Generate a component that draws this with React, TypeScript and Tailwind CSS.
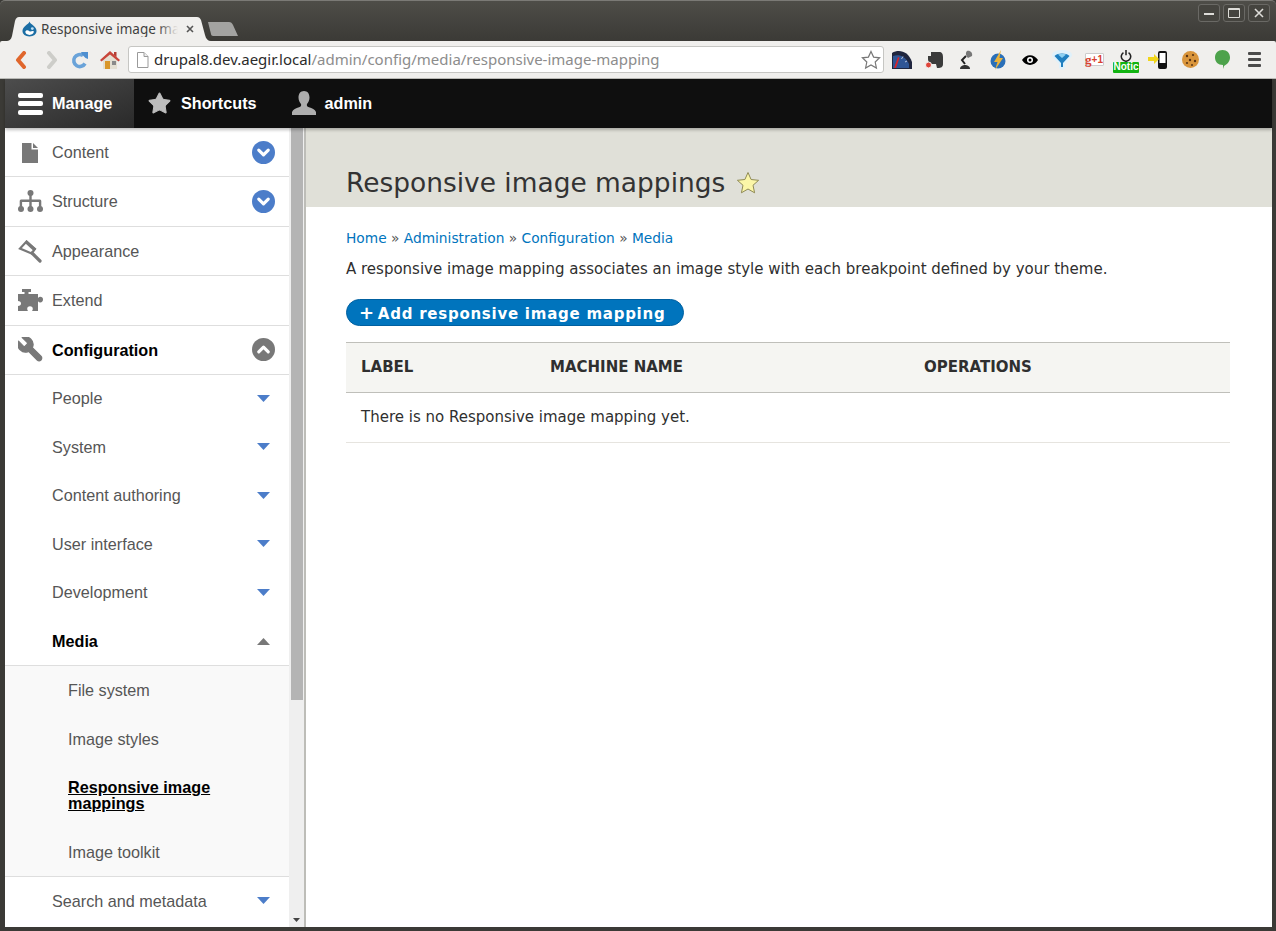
import { ChevronDown, ChevronUp, Star } from 'lucide-react'
import type { ReactNode } from 'react'

const sans = 'font-["Liberation_Sans",Arial,sans-serif]'
const dejavu = 'font-["DejaVu_Sans",sans-serif]'

function TabShape() {
  return (
    <svg className="absolute inset-0" height="24" viewBox="0 0 212 24" width="212">
      <path d="M0 24c3 0 5-1 6-5l3-15c1-3 2-4 4-4h178c2 0 3 1 4 3l4 15c1 4 3 6 6 6z" fill="#f0efed" />
    </svg>
  )
}

function DrupalDrop() {
  return (
    <svg height="16" viewBox="0 0 16 16" width="15">
      <path d="M8 0c.5 2 2.500 3 4 4.200 2 1.600 3.500 3.500 3.500 6 0 3.300-3.200 5.800-7.500 5.800S.5 13.500.5 10.200c0-2.500 1.500-4.400 3.500-6C5.500 3 7.500 2 8 0z" fill="#1c6ea4" />
      <path d="M3.500 11c1.500-2.500 3-1.500 4.500-.5s3-1.500 4.500 0c.5 2-2 3.800-4.500 3.800S3.500 13 3.500 11z" fill="#fff" />
      <circle cx="11" cy="7.500" fill="#bfe0f5" r="1.500" />
    </svg>
  )
}

function NavIcons() {
  return (
    <div className="flex w-[128px] items-center">
      <span className="flex w-[30px] justify-center pl-[12px]">
        <svg height="18" viewBox="0 0 12 18" width="12">
          <path d="M9 2 3 9l6 7" fill="none" stroke="#e0662c" strokeLinecap="round" strokeLinejoin="round" strokeWidth="4" />
        </svg>
      </span>
      <span className="flex w-[30px] justify-center pl-[13px]">
        <svg height="18" viewBox="0 0 12 18" width="12">
          <path d="m3 2 6 7-6 7" fill="none" stroke="#cdcdc9" strokeLinecap="round" strokeLinejoin="round" strokeWidth="4" />
        </svg>
      </span>
      <span className="flex w-[30px] justify-center pl-[10px]">
        <svg height="18" viewBox="0 0 18 18" width="18">
          <path d="M14 12.500A6 6 0 1 1 12 4.500" fill="none" stroke="#6aa3d9" strokeWidth="3.600" />
          <path d="M10 1h7v7l-2.500-1-3-3z" fill="#4f8fd0" />
        </svg>
      </span>
      <span className="flex w-[30px] justify-center pl-[9px]">
        <svg height="18" viewBox="0 0 20 18" width="20">
          <path d="M10 2 3 8v10h14V8z" fill="#e4dfd2" />
          <path d="M14 1h2.500v5L14 4z" fill="#b33d33" />
          <path d="M10 0 0 9l1.500 1.500L10 3.500l8.500 7L20 9z" fill="#c8453a" />
          <path d="M5 10h5v8H5z" fill="#d9962a" />
          <path d="M12 10h4v4h-4z" fill="#8a8a8a" />
        </svg>
      </span>
    </div>
  )
}

function Omnibox() {
  return (
    <div className="flex h-[27px] w-[756px] items-center rounded-[3px] border border-[#c6c6c3] bg-white pl-[7px] pr-[2px]">
      <svg height="16" viewBox="0 0 12 16" width="13">
        <path d="M1 .5h6.500L11.500 4.500v11H1z" fill="#fff" stroke="#9a9a9a" />
        <path d="M7.500.5v4h4" fill="#eee" stroke="#9a9a9a" />
      </svg>
      <span className='ml-[5px] flex-1 whitespace-nowrap font-["Noto_Sans",sans-serif] text-[15px] leading-none text-[#8c8c8c]'>
        <span className="text-[#2b2b2b]">drupal8.dev.aegir.local</span>
        /admin/config/media/responsive-image-mapping
      </span>
      <svg height="20" viewBox="0 0 20 20" width="20">
        <path d="m10 1.500 2.600 5.600 6 .7-4.400 4.200 1.200 6L10 15l-5.400 3 1.200-6L1.400 7.800l6-.7z" fill="#fff" stroke="#777" strokeWidth="1.200" />
      </svg>
    </div>
  )
}

function ExtIcons() {
  return (
    <div className="ml-[2px] flex items-center">
      <Ext>
        <svg height="19" viewBox="0 0 20 19" width="20">
          <path d="M0 19V3C7-1 16 1 20 12v7z" fill="#20263f" />
          <path d="M1 18V6c5-2 12-1 16 8v4z" fill="#2f5596" />
          <path d="M2 18 6 7l1.500.8L4 18z" fill="#d8232a" />
          <path d="M11 6.500 9.500 9M15 11l-2 1" stroke="#b9c6de" strokeWidth="1" />
        </svg>
      </Ext>
      <Ext>
        <svg height="19" viewBox="0 0 18 19" width="18">
          <path d="M6 2h8c3 0 4 2 4 5v7c0 3-2 4-5 4h-1l-1-4H8C5 14 3 12 3 9V6h3z" fill="#3b3b3b" />
          <circle cx="3.500" cy="15" fill="#e0453a" r="3" stroke="#f4f4f4" />
        </svg>
      </Ext>
      <Ext>
        <svg height="20" viewBox="0 0 14 20" width="14">
          <path d="M8 1c3-1 6 2 5 5L9 8C7 6 6 3 8 1z" fill="#777" />
          <path d="M7 6 3 10l3 4" fill="none" stroke="#222" strokeWidth="2" />
          <path d="M1 19c0-3 3-4 5-4s5 1 5 4z" fill="#333" />
        </svg>
      </Ext>
      <Ext>
        <svg height="20" viewBox="0 0 16 20" width="16">
          <circle cx="8" cy="11" fill="#2a6fb8" r="7.500" />
          <path d="M11 0 4 12h3.500L5 20l8-12H9.500z" fill="#eab33b" />
        </svg>
      </Ext>
      <Ext>
        <svg height="10" viewBox="0 0 16 10" width="16">
          <path d="M0 5c4-6.500 12-6.500 16 0-4 6.500-12 6.500-16 0z" fill="#000" />
          <circle cx="8" cy="5" fill="#fff" r="3" />
          <circle cx="8" cy="5" fill="#000" r="1.500" />
        </svg>
      </Ext>
      <Ext>
        <svg height="20" viewBox="0 0 20 20" width="20">
          <path d="M0 5c0-3 5-5 10-5s10 2 10 5c0 2-4 6-7 9v4l-3 2-3-2v-4C4 11 0 7 0 5z" fill="#dff1fb" />
          <path d="M2.500 6c2-1.800 4.500-2.500 7.500-2.500S15.500 4.200 17.500 6L11 13v4H9v-4z" fill="#1f7fc0" />
          <path d="M6 4.500 10 8l4-3.500c-2.500-1-5.500-1-8 0z" fill="#8bd0f2" />
        </svg>
      </Ext>
      <Ext>
        <span className={`flex h-[13px] w-[19px] items-center justify-center rounded-[1px] border border-[#ccc] bg-white ${sans} text-[10px] font-bold leading-none text-[#d8402f]`}>
          <span className='font-["Liberation_Serif",serif] text-[13px]'>g</span>
          +1
        </span>
      </Ext>
      <Ext>
        <span className="relative flex h-[24px] w-[26px] justify-center">
          <svg className="mt-[2px]" height="12" viewBox="0 0 14 14" width="12">
            <path d="M4 3a5.500 5.500 0 1 0 6 0M7 0v6" fill="none" stroke="#222" strokeWidth="1.800" />
          </svg>
          <span className={`absolute left-0 top-[14px] flex h-[11px] w-[26px] items-center justify-center rounded-[1px] bg-[#12b312] ${sans} text-[10px] font-bold leading-none text-white`}>
            Notic
          </span>
        </span>
      </Ext>
      <Ext>
        <svg height="18" viewBox="0 0 20 18" width="20">
          <rect fill="#111" height="18" rx="2" width="9" x="10" />
          <rect fill="#fff" height="10" width="6" x="11.500" y="2" />
          <path d="M0 6h6V3l5 5-5 5v-3H0z" fill="#f1d51a" />
        </svg>
      </Ext>
      <Ext>
        <svg height="17" viewBox="0 0 17 17" width="17">
          <circle cx="8.500" cy="8.500" fill="#d9953c" r="8.500" />
          <circle cx="5" cy="5" fill="#5a3414" r="1.200" />
          <circle cx="11" cy="4" fill="#5a3414" r="1.100" />
          <circle cx="8" cy="9" fill="#5a3414" r="1.200" />
          <circle cx="13" cy="10" fill="#5a3414" r="1.200" />
          <circle cx="5" cy="12" fill="#5a3414" r="1.100" />
          <circle cx="10" cy="14" fill="#5a3414" r="1" />
        </svg>
      </Ext>
      <Ext>
        <svg height="19" viewBox="0 0 15 19" width="15">
          <path d="M7.500 0C12 0 15 3 15 7.500c0 4-3 7-6 8.500l-1 3V15C3 15 0 12 0 7.500S3 0 7.500 0z" fill="#4da24b" />
        </svg>
      </Ext>
      <Ext>
        <span className="flex w-[13px] flex-col gap-[3px]">
          <span className="h-[3px] rounded-[1px] bg-[#4a4a4a]" />
          <span className="h-[3px] rounded-[1px] bg-[#4a4a4a]" />
          <span className="h-[3px] rounded-[1px] bg-[#4a4a4a]" />
        </span>
      </Ext>
    </div>
  )
}

function Ext({ children }: { children: ReactNode }) {
  return <span className="flex h-[38px] w-[32px] items-center justify-center">{children}</span>
}

function WinButton({ children }: { children: ReactNode }) {
  return (
    <span className="flex h-[18px] w-[22px] items-center justify-center rounded-[3px] border border-[#6a6965] bg-[#45443f]">
      {children}
    </span>
  )
}

function BrowserChrome() {
  return (
    <>
      <div className="flex h-[41px] items-start justify-between rounded-t-[5px] border-t border-[#7b7a76] bg-linear-to-b from-[#4e4d48] to-[#3b3a36]">
        <div className="flex pl-[6px] pt-[16px]">
          <div className="relative flex h-[24px] w-[212px] items-center pl-[16px]">
            <TabShape />
            <span className="relative flex items-center">
              <DrupalDrop />
              <span className='relative ml-[4px] w-[137px] overflow-hidden whitespace-nowrap font-["Noto_Sans",sans-serif] text-[13.500px] leading-[16px] text-[#3f3f3f]'>
                Responsive image mappings
                <span className="absolute inset-y-0 right-0 w-[20px] bg-linear-to-r from-transparent to-[#f0efed]" />
              </span>
              <svg className="ml-[8px]" height="8" viewBox="0 0 8 8" width="8">
                <path d="m1 1 6 6M7 1 1 7" stroke="#555" strokeWidth="1.600" />
              </svg>
            </span>
          </div>
          <svg className="-ml-[11px] mt-[5px]" height="14" viewBox="0 0 32 14" width="32">
            <path d="M1 0h21c2 0 3 1 4 3l5 11H6c-1 0-2-1-2-2z" fill="#a3a3a1" />
          </svg>
        </div>
        <div className="flex gap-[3px] pr-[6px] pt-[3px]">
          <WinButton>
            <span className="mt-[2px] h-[2px] w-[10px] bg-[#dddcd8]" />
          </WinButton>
          <WinButton>
            <span className="h-[10px] w-[12px] rounded-[1px] border border-t-2 border-[#dddcd8]" />
          </WinButton>
          <WinButton>
            <svg height="10" viewBox="0 0 10 10" width="10">
              <path d="m1 1 8 8M9 1 1 9" stroke="#dddcd8" strokeWidth="1.600" />
            </svg>
          </WinButton>
        </div>
      </div>
      <div className="flex h-[38px] items-center rounded-t-[2px] border-b border-[#bcbcb8] bg-[#f0efed]">
        <NavIcons />
        <Omnibox />
        <ExtIcons />
      </div>
    </>
  )
}

function AdminBar() {
  return (
    <div className={`relative z-10 flex h-[49px] shrink-0 items-center bg-[#0f0f0f] shadow-[0_2px_3px_rgba(0,0,0,0.25)] ${sans} text-[16.200px] font-bold text-white`}>
      <div className="flex h-full w-[129px] items-center bg-linear-to-br from-[#4d4d4d] to-[#2a2a2a] pl-[13px]">
        <span className="flex w-[25px] flex-col gap-[3.500px]">
          <span className="h-[5px] rounded-[2px] bg-white" />
          <span className="h-[5px] rounded-[2px] bg-white" />
          <span className="h-[5px] rounded-[2px] bg-white" />
        </span>
        <span className="ml-[9px]">Manage</span>
      </div>
      <div className="flex items-center pl-[13px]">
        <Star className="fill-[#bdbdbd] text-[#bdbdbd]" size={25} strokeWidth={1} />
        <span className="ml-[9px]">Shortcuts</span>
      </div>
      <div className="ml-[35px] flex items-center">
        <svg height="24" viewBox="0 0 24 24" width="24">
          <path d="M12 0c3.600 0 5.500 2.800 5.500 6.500 0 2.800-1.200 5-2.500 6.500-.5 1.500 0 2.500 2 3.300 3 1.200 6 2 7 4.700v3H0v-3c1-2.700 4-3.500 7-4.700 2-.8 2.500-1.800 2-3.300-1.300-1.500-2.500-3.700-2.500-6.500C6.500 2.800 8.400 0 12 0z" fill="#adadad" />
        </svg>
        <span className="ml-[9px]">admin</span>
      </div>
    </div>
  )
}

const iconGrey = '#787878'

const menuIcons: Record<string, ReactNode> = {
  Content: (
    <svg height="20" viewBox="0 0 16 20" width="16">
      <path d="M0 0h9.500v6.500H16V20H0z" fill={iconGrey} />
      <path d="M11 0l5 5h-5z" fill={iconGrey} />
    </svg>
  ),
  Structure: (
    <svg height="22" viewBox="0 0 25 22" width="25">
      <g fill={iconGrey}>
        <circle cx="12.500" cy="3" r="3" />
        <circle cx="3" cy="19" r="3" />
        <circle cx="12.500" cy="19" r="3" />
        <circle cx="22" cy="19" r="3" />
        <path d="M11.300 4h2.400v5.500H22a1.500 1.500 0 0 1 1.300 1.500v6h-2.400v-5h-7.200v5h-2.400v-5H4.100v5H1.700v-6A1.500 1.500 0 0 1 3 9.500h8.300z" />
      </g>
    </svg>
  ),
  Appearance: (
    <svg height="24" viewBox="0 0 24 24" width="24">
      <path d="M8.500 2.500 17 10l-3.500 4.500L2 9.500z" fill="none" stroke={iconGrey} strokeWidth="2.200" />
      <path d="M8.500 1 18 10l-1.800 2.500L7 4z" fill={iconGrey} />
      <path d="m14 14 8 8" stroke={iconGrey} strokeLinecap="round" strokeWidth="3.200" />
    </svg>
  ),
  Extend: (
    <svg height="23" viewBox="0 0 25 23" width="25">
      <path
        d="M0 5h6.500V3H4V0h9v3h-2.500v2H20v4c.7-.8 1.400-1.200 2.200-1.200a2.800 2.800 0 0 1 0 5.600c-.8 0-1.500-.4-2.200-1.200V22h-6c.5-.8.800-1.400.8-2a2.800 2.800 0 0 0-5.600 0c0 .6.300 1.200.8 2H0v-5c2 0 3-1 3-2.500S2 12 0 12z"
        fill={iconGrey}
      />
    </svg>
  ),
  Configuration: (
    <svg height="25" viewBox="2 2 20 20" width="25">
      <path
        d="M14.700 6.300a1 1 0 0 0 0 1.400l1.600 1.600a1 1 0 0 0 1.400 0l3.770-3.770a6 6 0 0 1-7.940 7.940l-6.910 6.910a2.120 2.120 0 0 1-3-3l6.910-6.910a6 6 0 0 1 7.940-7.940l-3.760 3.760z"
        fill={iconGrey}
        stroke={iconGrey}
        transform="matrix(-1 0 0 1 24 0)"
      />
    </svg>
  ),
}

function TopItem({ label, open, toggle, first }: { label: string; open?: boolean; toggle?: boolean; first?: boolean }) {
  return (
    <div
      className={`flex shrink-0 items-center border-b border-[#dedede] pr-[14px] ${first ? 'h-[49px] pt-[1px]' : 'h-[49.500px]'} ${
        open ? 'font-bold text-black' : 'text-[#565656]'
      }`}
    >
      <span className="flex w-[47px] justify-center pl-[7px] pr-[4px]">{menuIcons[label]}</span>
      <span className="flex-1">{label}</span>
      {toggle && (
        <span
          className={`flex h-[23px] w-[23px] items-center justify-center rounded-full ${
            open ? 'bg-[#787878]' : 'bg-[#4c7dc9]'
          }`}
        >
          {open ? (
            <ChevronUp className="text-white" size={19} strokeWidth={4} />
          ) : (
            <ChevronDown className="text-white" size={19} strokeWidth={4} />
          )}
        </span>
      )}
    </div>
  )
}

function SubItem({ label, open }: { label: string; open?: boolean }) {
  return (
    <div
      className={`flex h-[48.600px] shrink-0 items-center pl-[47px] pr-[19px] ${
        open ? 'font-bold text-black' : 'text-[#565656]'
      }`}
    >
      <span className="flex-1">{label}</span>
      <svg height="7" viewBox="0 0 13 7" width="13">
        <path d={open ? 'M6.500 0 13 7H0z' : 'M0 0h13L6.500 7z'} fill={open ? iconGrey : '#4c7dc9'} />
      </svg>
    </div>
  )
}

function LeafItem({ children, className }: { children: ReactNode; className: string }) {
  return (
    <div className={`flex shrink-0 items-center pl-[63px] leading-[16px] ${className}`}>
      <span>{children}</span>
    </div>
  )
}

function Sidebar() {
  return (
    <div className="flex shrink-0">
      <aside className={`flex w-[284px] flex-col overflow-hidden bg-white ${sans} text-[16.200px]`}>
        <TopItem first label="Content" toggle />
        <TopItem label="Structure" toggle />
        <TopItem label="Appearance" />
        <TopItem label="Extend" />
        <div className="-mb-[1.200px]">
          <TopItem label="Configuration" open toggle />
        </div>
        <SubItem label="People" />
        <SubItem label="System" />
        <SubItem label="Content authoring" />
        <SubItem label="User interface" />
        <SubItem label="Development" />
        <SubItem label="Media" open />
        <div className="-mt-[0.600px] border-y border-[#dedede] bg-[#f9f9f9]">
          <LeafItem className="h-[48.600px] text-[#565656]">File system</LeafItem>
          <LeafItem className="h-[48.600px] text-[#565656]">Image styles</LeafItem>
          <LeafItem className="h-[65px] font-bold text-black underline">
            Responsive image
            <br />
            mappings
          </LeafItem>
          <LeafItem className="h-[47.600px] text-[#565656]">Image toolkit</LeafItem>
        </div>
        <SubItem label="Search and metadata" />
      </aside>
      <div className="flex w-[15px] flex-col bg-[#efefef]">
        <div className="ml-[2px] h-[572px] w-[12px] bg-[#b4b4b4]" />
        <div className="flex flex-1 items-end justify-center pb-[5px]">
          <svg height="4" viewBox="0 0 7 4" width="7">
            <path d="M0 0h7L3.500 4z" fill="#444" />
          </svg>
        </div>
      </div>
    </div>
  )
}

function Content() {
  return (
    <main className={`min-w-0 flex-1 border-l-2 border-[#bdbdb8] bg-white ${dejavu} text-[#2f2f2f]`}>
      <div className="flex h-[79px] items-end bg-[#e0e0d8] pb-[6px] pl-[40px]">
        <h1 className="text-[26.450px] font-normal leading-[36px] text-[#333]">Responsive image mappings</h1>
        <svg className="mb-[6px] ml-[11px]" height="24" viewBox="0 0 24 24" width="24">
          <path d="m12 1.500 3.100 7 7.500.8-5.600 5 1.600 7.500-6.600-3.800-6.600 3.800L7 14.300l-5.600-5 7.500-.8z" fill="#fbf6a8" stroke="#8f8a55" />
        </svg>
      </div>
      <div className="px-[40px] pt-[22px] text-[15px]">
        <div className="text-[13.750px] leading-[18px] text-[#555]">
          <a className="text-[#0074bd]">Home</a> » <a className="text-[#0074bd]">Administration</a> »{' '}
          <a className="text-[#0074bd]">Configuration</a> » <a className="text-[#0074bd]">Media</a>
        </div>
        <p className="mt-[12px] leading-[20px]">
          A responsive image mapping associates an image style with each breakpoint defined by your theme.
        </p>
        <button className="mt-[20px] flex h-[27px] w-[338px] items-center rounded-[14px] border border-[#0060a0] bg-[#0074bd] pl-[12px] pt-[3px] text-[15px] font-bold tracking-[0.75px] text-white">
          <span className="-mt-[3px] mr-[3px] text-[18px] leading-none">+</span>
          Add responsive image mapping
        </button>
        <table className="mt-[16px] w-[884px] table-fixed text-left">
          <thead>
            <tr className="h-[50px] border-y border-[#bfbfba] bg-[#f5f5f2] font-bold">
              <th className="w-[204px] pl-[15px]">LABEL</th>
              <th className="w-[374px] pl-0">MACHINE NAME</th>
              <th>OPERATIONS</th>
            </tr>
          </thead>
          <tbody>
            <tr className="h-[50px] border-b border-[#e6e4df]">
              <td className="whitespace-nowrap pl-[15px]" colSpan={3}>
                There is no Responsive image mapping yet.
              </td>
            </tr>
          </tbody>
        </table>
      </div>
    </main>
  )
}

export default function App() {
  return (
    <div className="flex h-[931px] w-[1276px] flex-col overflow-hidden bg-[#3b3a36] pb-[4px] pl-[4px] pr-[4px]">
      <div className="-mx-[4px]">
        <BrowserChrome />
      </div>
      <div className="flex min-h-0 flex-1 flex-col pl-[1px]">
        <AdminBar />
        <div className="flex min-h-0 flex-1">
          <Sidebar />
          <Content />
        </div>
      </div>
    </div>
  )
}
